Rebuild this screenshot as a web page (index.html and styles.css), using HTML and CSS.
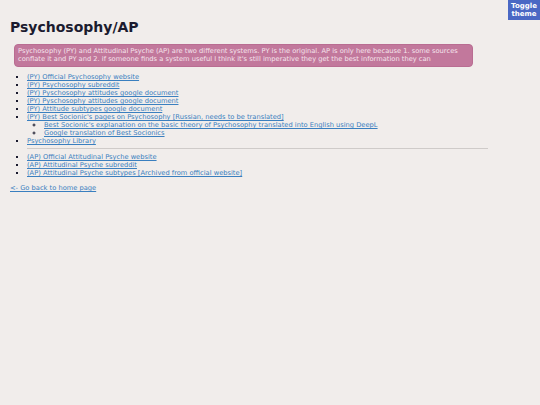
FILE: index.html
```html
<!DOCTYPE html>
<html>
<head>
<meta charset="utf-8">
<link rel="stylesheet" href="styles.css">
</head>
<body>
<button class="toggle">Toggle<br>theme</button>
<h1 class="title">Psychosophy/AP</h1>
<div class="note">Psychosophy (PY) and Attitudinal Psyche (AP) are two different systems. PY is the original. AP is only here because 1. some sources conflate it and PY and 2. if someone finds a system useful I think it's still imperative they get the best information they can</div>
<ul class="links">
  <li><a href="#">(PY) Official Psychosophy website</a></li>
  <li><a href="#">(PY) Psychosophy subreddit</a></li>
  <li><a href="#">(PY) Pyschosophy attitudes google document</a></li>
  <li><a href="#">(PY) Pyschosophy attitudes google document</a></li>
  <li><a href="#">(PY) Attitude subtypes google document</a></li>
  <li><a href="#">(PY) Best Socionic's pages on Psychosophy [Russian, needs to be translated]</a>
    <ul class="sub">
      <li><a href="#">Best Socionic's explanation on the basic theory of Psychosophy translated into English using DeepL</a></li>
      <li><a href="#">Google translation of Best Socionics</a></li>
    </ul>
  </li>
  <li><a href="#">Psychosophy Library</a></li>
  <hr class="sep">
  <li><a href="#">(AP) Official Attitudinal Psyche website</a></li>
  <li><a href="#">(AP) Attitudinal Psyche subreddit</a></li>
  <li><a href="#">(AP) Attitudinal Psyche subtypes [Archived from official website]</a></li>
</ul>
<a class="back" href="#">&lt;- Go back to home page</a>
</body>
</html>
```
FILE: styles.css
```css
html, body {
  background: #f1edeb;
}
body {
  margin: 0;
  padding: 0 10px;
  font-family: "DejaVu Sans", Verdana, sans-serif;
  font-size: 6.7px;
  line-height: 8px;
  color: #1a1a2e;
}
.toggle {
  position: fixed;
  top: 0;
  right: 0;
  width: 32px;
  height: 20px;
  padding: 0;
  border: none;
  background: #4a68c4;
  color: #fff;
  font-family: "DejaVu Sans", Verdana, sans-serif;
  font-weight: bold;
  font-size: 7px;
  line-height: 8px;
}
.title {
  margin: 0;
  padding-top: 19px;
  font-size: 14px;
  line-height: 16px;
  color: #1b1b2f;
}
.note {
  margin: 9px 57px 0 4px;
  padding: 2px 3px 3px;
  background: #c2789c;
  color: #f5e4ec;
  border-radius: 4px;
  border: 1px solid #b96d92;
}
.links {
  margin: 6px 0 0;
  padding: 0 0 0 17px;
  list-style: square;
}
.links a, .back {
  color: #3a7fbf;
}
.sub {
  margin: 0;
  padding-left: 17px;
  list-style: circle;
}
.sep {
  margin: 3px 42px 4px 0;
  border: none;
  border-top: 1px solid #cfcbc9;
  height: 0;
}
.back {
  display: inline-block;
  margin-top: 7px;
}
```
